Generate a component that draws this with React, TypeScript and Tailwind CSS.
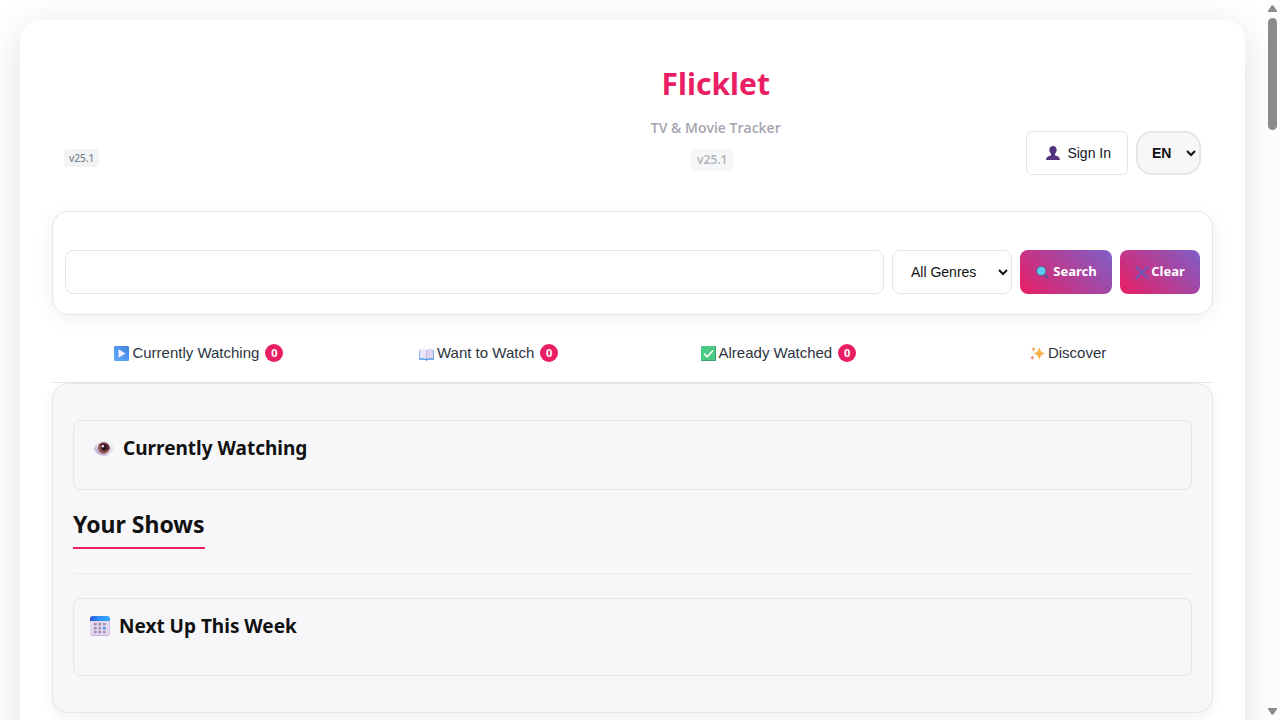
import React from "react";

const uiFont = 'font-["Noto_Sans",sans-serif]';

function PersonIcon() {
  return (
    <svg viewBox="0 0 16 16" className="size-4 shrink-0" aria-hidden="true">
      <path d="M8 1C5.600 1 4.400 2.600 4.500 4.600c-.5.2-.4 1.500.2 1.800.2 1.200.8 2 1.500 2.500v1.300C4.500 11 1.300 11.200 1 15h14c-.3-3.800-3.500-4-5.200-4.800V8.900c.7-.5 1.300-1.300 1.500-2.500.6-.3.7-1.600.2-1.800C11.600 2.600 10.400 1 8 1z" fill="#533580" />
      <path d="M6.200 8.900c1 .8 2.600.8 3.600 0v1.300c-1 .6-2.600.6-3.600 0z" fill="#3f2766" />
    </svg>
  );
}

function SearchIcon() {
  return (
    <svg viewBox="0 0 14 14" className="size-[14px] shrink-0" aria-hidden="true">
      <path d="M9.500 9.500l2.700 2.700" stroke="#4b5a94" strokeWidth="2" strokeLinecap="round" />
      <circle cx="6.200" cy="6" r="4.600" fill="#5ccbed" stroke="#42658f" strokeWidth=".8" />
    </svg>
  );
}

function CrossIcon() {
  return (
    <svg viewBox="0 0 14 14" className="size-[14px] shrink-0" aria-hidden="true">
      <path d="M1.500 2l11 11M12.500 2l-11 11" stroke="#6a59bd" strokeWidth="2" strokeLinecap="round" />
    </svg>
  );
}

function PlayIcon() {
  return (
    <svg viewBox="0 0 15 15" className="size-[15px] shrink-0" aria-hidden="true">
      <defs>
        <linearGradient id="play" x1="0" y1="1" x2="1" y2="0">
          <stop offset="0" stopColor="#62adff" />
          <stop offset="1" stopColor="#3f83df" />
        </linearGradient>
      </defs>
      <rect width="15" height="15" rx="1" fill="url(#play)" />
      <path d="M4.500 3.300v8.400l7-4.200z" fill="#f3f0ff" />
    </svg>
  );
}

function BookIcon() {
  return (
    <svg viewBox="0 0 15 15" className="size-[15px] shrink-0" aria-hidden="true">
      <path d="M0 4h15v9.800H9L7.500 15 6 13.800H0z" fill="#4a9ae8" />
      <path d="M.6 3.200C3 2.500 6 2.600 7.500 4v9C5.500 12 3 12 .6 12.400z" fill="#ece6f8" />
      <path d="M14.400 3.200C12 2.500 9 2.600 7.500 4v9c2-1 4.500-1 6.900-.6z" fill="#dfd6f1" />
      <path d="M7.500 4v9" stroke="#b9b0d6" strokeWidth=".6" />
    </svg>
  );
}

function CheckIcon() {
  return (
    <svg viewBox="0 0 15 15" className="size-[15px] shrink-0" aria-hidden="true">
      <rect width="15" height="15" rx="1" fill="#4acb85" />
      <path d="M0 14.500h15M14.500 0v15" stroke="#35a66b" />
      <path d="M3 7.600l3.200 3.200L12 4.500" fill="none" stroke="#fff" strokeWidth="1.600" />
    </svg>
  );
}

function SparklesIcon() {
  return (
    <svg viewBox="0 0 15 15" className="size-[15px] shrink-0" aria-hidden="true">
      <path d="M9.300.5c.7 4.100 2 6 5.700 7-3.700 1-5 2.900-5.700 7-.7-4.100-2-6-5.700-7 3.700-1 5-2.900 5.700-7z" fill="#fbb04c" />
      <path d="M3.500.5c.3 1.700.9 2.300 2.400 2.700C4.400 3.600 3.800 4.200 3.500 6 3.200 4.200 2.600 3.600 1 3.200 2.600 2.800 3.200 2.200 3.500.5z" fill="#f9a35c" />
      <path d="M2.300 9c.3 1.700.9 2.300 2.300 2.700-1.400.4-2 1-2.300 2.800C2 12.700 1.400 12.100 0 11.700 1.400 11.300 2 10.700 2.300 9z" fill="#f58f70" />
    </svg>
  );
}

function EyeIcon() {
  return (
    <svg viewBox="0 0 20 20" className="size-5 shrink-0" aria-hidden="true">
      <defs>
        <linearGradient id="eye" x1="0" y1="1" x2="1" y2="0">
          <stop offset="0" stopColor="#a58fc8" />
          <stop offset=".45" stopColor="#ddd8e4" />
          <stop offset="1" stopColor="#f5f4f6" />
        </linearGradient>
      </defs>
      <path d="M0 10.500C2 5.500 6 3 10 3s8 2.500 10 7c-2 5-6 7.800-10 7.800S1.500 15.500 0 10.500z" fill="url(#eye)" />
      <circle cx="9.800" cy="10" r="5.800" fill="#96534d" />
      <path d="M5 7a6 6 0 0 1 10.600 4.500C13 12 8 11 5 7z" fill="#65283c" />
      <circle cx="10" cy="9.800" r="3" fill="#24151f" />
      <circle cx="8.800" cy="8.300" r="1.300" fill="#e8e0e6" />
    </svg>
  );
}

function CalendarIcon() {
  const columns = [4, 8.500, 13];
  const rows = [7, 11, 14.800];
  return (
    <svg viewBox="0 0 20 20" className="size-5 shrink-0" aria-hidden="true">
      <defs>
        <linearGradient id="cal">
          <stop offset="0" stopColor="#2f55d4" />
          <stop offset=".4" stopColor="#2c8cf6" />
          <stop offset="1" stopColor="#39aefd" />
        </linearGradient>
      </defs>
      <rect y="1" width="20" height="19" rx="3" fill="#c9b2df" />
      <rect width="19.400" height="19" rx="3" fill="#e3d6ef" />
      <path d="M0 5V3a3 3 0 0 1 3-3h14a3 3 0 0 1 3 3v2z" fill="url(#cal)" />
      {rows.map((y, row) =>
        columns.map((x, col) => (
          <rect key={`${x}-${y}`} x={x} y={y} width="2.600" height="2.400" fill={row === 1 && col === 2 ? "#3394ef" : "#9c8dac"} />
        )),
      )}
    </svg>
  );
}

const tabs = [
  { label: "Currently Watching", icon: <PlayIcon />, count: 0 },
  { label: "Want to Watch", icon: <BookIcon />, count: 0 },
  { label: "Already Watched", icon: <CheckIcon />, count: 0 },
  { label: "Discover", icon: <SparklesIcon />, count: null },
];

function Chevron({ className }: { className: string }) {
  return (
    <svg viewBox="0 0 10 8" className={`pointer-events-none absolute top-1/2 h-2 w-[10px] -translate-y-1/2 ${className}`} aria-hidden="true">
      <path d="M1 2l4 4 4-4" fill="none" stroke="#111" strokeWidth="2" />
    </svg>
  );
}

function Header() {
  return (
    <header className="flex items-end gap-4 px-3">
      <div className="flex w-[30%] pb-2">
        <span className={`${uiFont} rounded bg-[#f1f3f5] px-[5px] text-[10px] leading-[18px] font-medium text-[#7d868c]`}>v25.1</span>
      </div>
      <div className="flex flex-1 flex-col items-center pb-1">
        <h1 className={`${uiFont} text-[30px] leading-10 font-bold text-[#e91e63]`}>Flicklet</h1>
        <p className="mt-3 font-['Open_Sans',sans-serif] text-sm leading-6 font-semibold text-[#a5a5b0]">TV &amp; Movie Tracker</p>
        <span className={`${uiFont} mt-[9px] mr-[7px] rounded bg-[#f7f7fa] px-[6px] text-xs leading-[22px] font-semibold text-[#adb7b9]`}>v25.1</span>
      </div>
      <div className="flex gap-2">
        <button type="button" className="flex h-11 items-center gap-[6px] rounded-md border border-[#e5e5ea] bg-white px-4 pl-[18px] text-sm text-[#111827]">
          <PersonIcon />
          Sign In
        </button>
        <div className="relative">
          <select aria-label="Language" className="h-11 w-[65px] appearance-none rounded-2xl border-2 border-[#e5e5ea] bg-[#f7f7fa] pl-[14px] text-sm font-bold text-[#111]">
            <option>EN</option>
          </select>
          <Chevron className="right-[5px]" />
        </div>
      </div>
    </header>
  );
}

function SearchBar() {
  return (
    <form className="mt-9 flex gap-2 rounded-2xl border border-[#e5e5ea] bg-white px-3 pt-[38px] pb-5 shadow-[0_4px_20px_rgba(0,0,0,0.06)]" onSubmit={(e) => e.preventDefault()}>
      <input type="search" aria-label="Search shows and movies" className="h-11 min-w-0 flex-1 rounded-lg border border-[#e5e5ea] bg-white px-4 text-sm" />
      <div className="relative">
        <select aria-label="Genre" className="h-11 w-[120px] appearance-none rounded-lg border border-[#e5e5ea] bg-white pl-[18px] text-sm text-[#111]">
          <option>All Genres</option>
        </select>
        <Chevron className="right-1" />
      </div>
      <button type="submit" className={`${uiFont} flex h-11 w-[92px] items-center justify-center gap-1 rounded-lg bg-linear-45/srgb from-[#e91e63] to-[#7e5fc9] text-[13px] font-bold text-white`}>
        <SearchIcon />
        Search
      </button>
      <button type="reset" className={`${uiFont} flex h-11 w-20 items-center justify-center gap-[2px] rounded-lg bg-linear-45/srgb from-[#e91e63] to-[#7e5fc9] text-[13px] font-bold text-white`}>
        <CrossIcon />
        Clear
      </button>
    </form>
  );
}

function Tabs() {
  return (
    <nav className="grid grid-cols-4 border-b border-[#e5e5ea] pt-4 pb-[7px] pl-[2px]">
      {tabs.map((tab) => (
        <button key={tab.label} type="button" className="flex h-11 items-center justify-center text-[15px] text-[#2c3440]">
          <span className="mr-[3px]">{tab.icon}</span>
          {tab.label}
          {tab.count !== null && (
            <span className={`${uiFont} ml-[6px] size-[18px] rounded-full bg-[#e91e63] text-center text-[11px] leading-[18px] font-bold text-white`}>{tab.count}</span>
          )}
        </button>
      ))}
    </nav>
  );
}

export default function App() {
  return (
    <div className='flex h-screen overflow-hidden bg-white font-["Liberation_Sans",Arial,sans-serif] text-[#111]'>
      <div className="min-w-0 flex-1 overflow-hidden p-5">
        <main className="min-h-[1200px] rounded-[20px] bg-white px-8 pt-11 shadow-[0_8px_40px_rgba(0,0,0,0.12)]">
          <Header />
          <SearchBar />
          <Tabs />
          <section className={`${uiFont} rounded-2xl border border-[#e5e5ea] bg-[#f7f7fa] px-5 py-9 shadow-[0_4px_12px_rgba(0,0,0,0.06)]`}>
            <div className="rounded-lg border border-[#e5e5ea] px-5 pt-3 pb-[26px]">
              <h3 className="flex items-center gap-[9px] text-[19px] leading-[30px] font-bold">
                <EyeIcon />
                Currently Watching
              </h3>
            </div>
            <div className="flex border-b border-[#ececf0] pt-[18px] pb-6">
              <h2 className="border-b-2 border-[#e91e63] pb-[6px] text-[23px] leading-[33px] font-bold">Your Shows</h2>
            </div>
            <div className="mt-6 rounded-lg border border-[#e5e5ea] px-4 pt-3 pb-[34px]">
              <h3 className="flex items-center gap-[9px] text-[19px] leading-[30px] font-bold">
                <CalendarIcon />
                Next Up This Week
              </h3>
            </div>
          </section>
        </main>
      </div>
      <div className="flex w-[15px] flex-col items-center bg-[#fcfcfc] py-[5px]" aria-hidden="true">
        <svg viewBox="0 0 9 7" className="h-[7px] w-[9px]">
          <path d="M0 7V6l3.500-5.500h2L9 6v1z" fill="#8b8b8b" />
        </svg>
        <div className="mt-[6px] h-28 w-[9px] rounded-full bg-[#8b8b8b]" />
        <svg viewBox="0 0 9 7" className="mt-auto h-[7px] w-[9px]">
          <path d="M0 0v1l3.500 5.500h2L9 1V0z" fill="#8b8b8b" />
        </svg>
      </div>
    </div>
  );
}
